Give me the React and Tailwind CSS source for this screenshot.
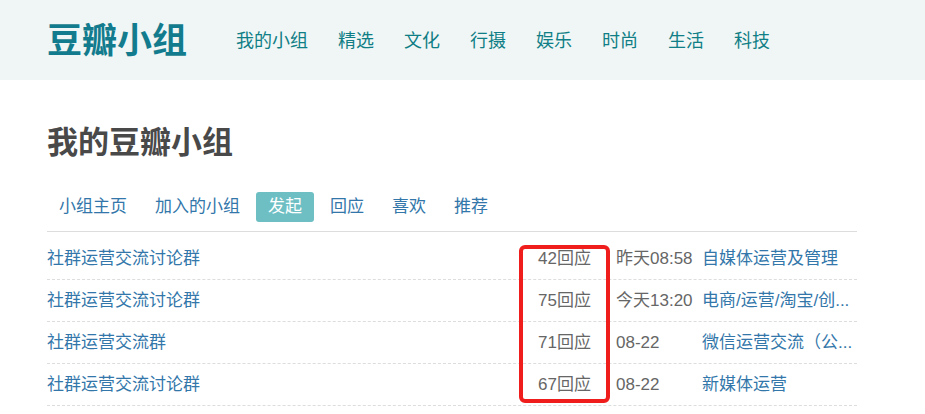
const navLinks = ['我的小组', '精选', '文化', '行摄', '娱乐', '时尚', '生活', '科技'];
const tabs = ['小组主页', '加入的小组', '发起', '回应', '喜欢', '推荐'];
const topics = [
	{ title: '社群运营交流讨论群', replies: 42, time: '昨天08:58', group: '自媒体运营及管理' },
	{ title: '社群运营交流讨论群', replies: 75, time: '今天13:20', group: '电商/运营/淘宝/创...' },
	{ title: '社群运营交流群', replies: 71, time: '08-22', group: '微信运营交流（公...' },
	{ title: '社群运营交流讨论群', replies: 67, time: '08-22', group: '新媒体运营' },
];

const font = { fontFamily: '"Liberation Sans", Arial, "Noto Sans CJK SC", sans-serif' };

const App = () => {
	return (
		<div className="min-h-[414px] bg-white" style={font}>
			<header className="h-[80px] bg-[#f0f6f5]">
				<div className="flex h-full items-center pl-[47px]">
					<a className="text-[35px] font-bold leading-none text-[#127b8d]">豆瓣小组</a>
					<nav className="ml-[49px] flex items-center gap-[30px] pt-[1px]">
						{navLinks.map((link) => (
							<a key={link} className="text-[18px] leading-none text-[#0f7e86]">{link}</a>
						))}
					</nav>
				</div>
			</header>

			<main className="ml-[47px] w-[810px]">
				<h1 className="mt-[47px] text-[31px] font-bold leading-none text-[#494949]">我的豆瓣小组</h1>

				<div className="mt-[34px] flex items-center gap-[4px] border-b border-[#dddddd] pb-[9px]">
					{tabs.map((tab) => (
						<a
							key={tab}
							className={
								tab === '发起'
									? 'flex h-[30px] items-center rounded-[3px] bg-[#6dbfc4] px-[12px] text-[17px] text-white'
									: 'flex h-[30px] items-center px-[12px] text-[17px] text-[#3377aa]'
							}
						>
							{tab}
						</a>
					))}
				</div>

				<div className="relative mt-[6px]">
					{topics.map((topic, index) => (
						<div key={index} className="flex h-[42px] items-center border-b border-dashed border-[#dddddd] pt-[1px] text-[17px]">
							<a className="flex-1 text-[#3377aa]">{topic.title}</a>
							<span className="w-[91px] text-center text-[#666666]">{topic.replies}回应</span>
							<span className="w-[92px] whitespace-nowrap pl-[6px] text-[#666666]">{topic.time}</span>
							<a className="w-[155px] whitespace-nowrap text-[#3377aa]">{topic.group}</a>
						</div>
					))}
					<div className="pointer-events-none absolute left-[472px] top-[7px] h-[158px] w-[91px] rounded-[6px] border-[4px] border-[#f01d1d]" />
				</div>
			</main>
		</div>
	);
};

export default App;
